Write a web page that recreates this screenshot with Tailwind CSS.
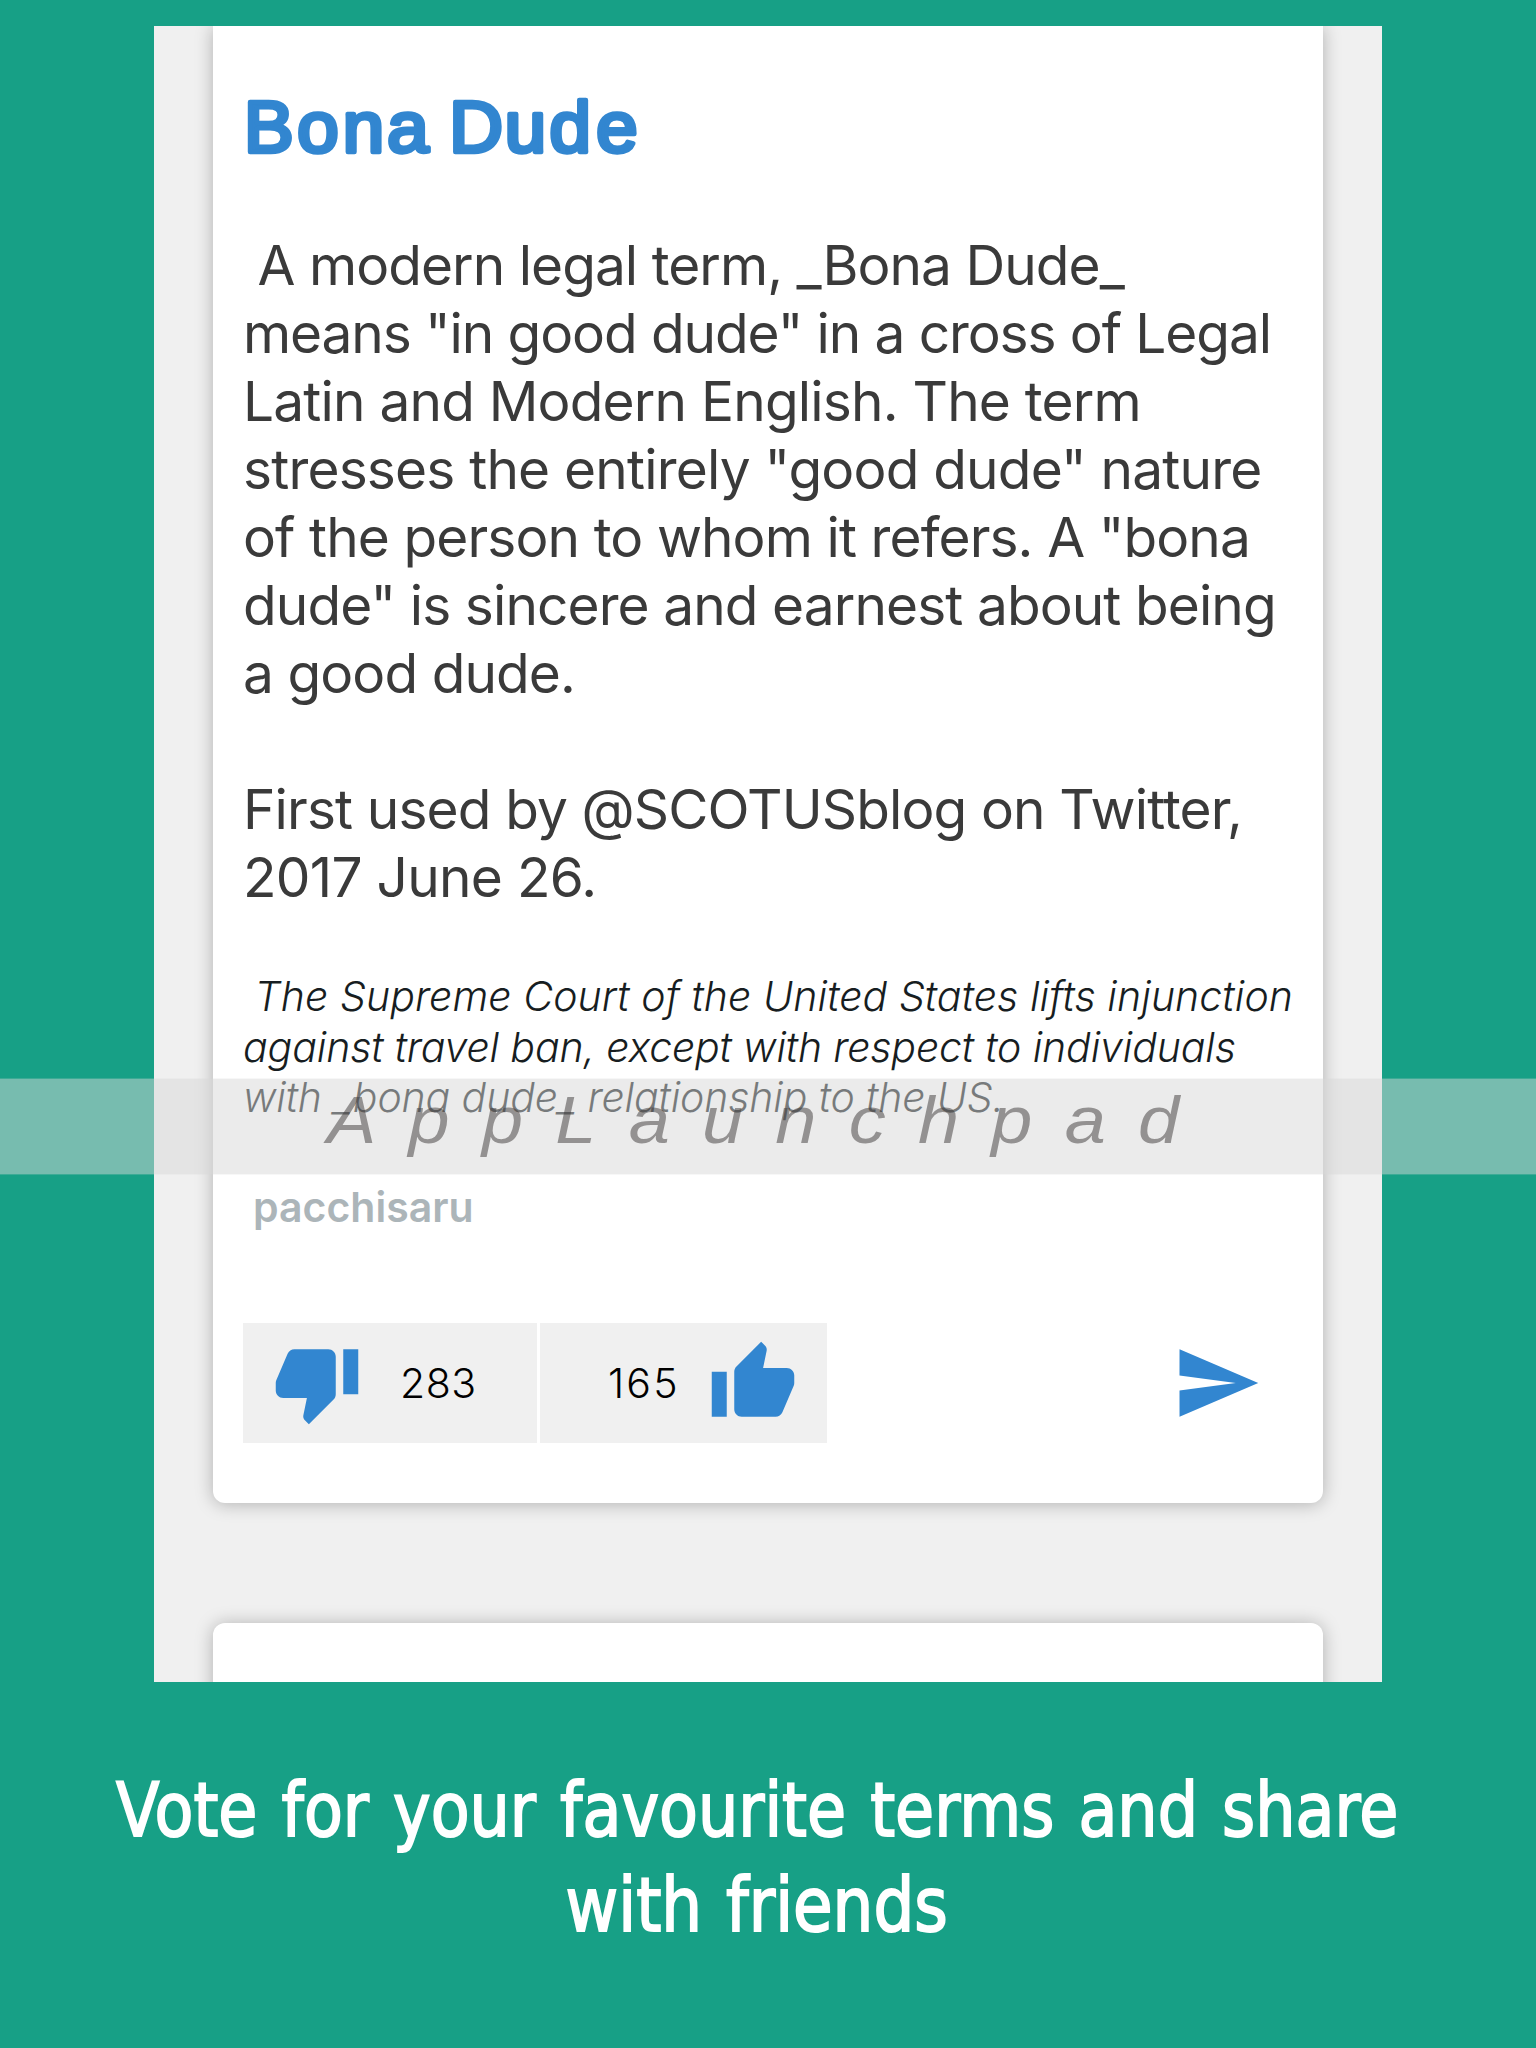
<!DOCTYPE html>
<html lang="en">
<head>
<meta charset="utf-8">
<title>Bona Dude</title>
<script src="https://cdn.jsdelivr.net/npm/@tailwindcss/browser@4"></script>
</head>
<body class="bg-[#17a086]">
<div class="relative flex h-[2048px] w-[1536px] flex-col items-center overflow-hidden bg-[#17a086] pt-[26px]">

  <!-- App screen -->
  <main class="flex h-[1656px] w-[1228px] shrink-0 flex-col items-center overflow-hidden bg-[#f0f0f0] font-['Inter',sans-serif]">
    <article class="h-[1477px] w-[1110px] shrink-0 rounded-b-xl bg-white pl-[30px] shadow-[0_1px_18px_rgba(0,0,0,0.27)]">
      <h1 class="h-[205px]">
        <svg class="block" width="440" height="205" viewBox="243 26 440 205">
          <text class="font-['Liberation_Sans',sans-serif] text-[71.500px]" transform="scale(1.04 1)" x="234.5 285.8 329.6 372.3 415 432 485.3 528.3 573.4" y="152.5" fill="#3286d0" stroke="#3286d0" stroke-width="4.4" stroke-linejoin="round" stroke-linecap="round">Bona Dude</text>
        </svg>
      </h1>

      <p class="text-[55px] leading-[68px] whitespace-pre text-[#3a3a3a]"><span class="block tracking-[-0.96px]"> A modern legal term, _Bona Dude_</span><span class="block tracking-[-1.1px]">means "in good dude" in a cross of Legal</span><span class="block tracking-[-0.81px]">Latin and Modern English. The term</span><span class="block tracking-[-0.81px]">stresses the entirely "good dude" nature</span><span class="block tracking-[-0.9px]">of the person to whom it refers. A "bona</span><span class="block tracking-[-0.91px]">dude" is sincere and earnest about being</span><span class="block tracking-[-0.93px]">a good dude.</span><span class="mt-[68px] block tracking-[-0.87px]">First used by @SCOTUSblog on Twitter,</span><span class="block tracking-[-0.72px]">2017 June 26.</span></p>

      <p class="mt-[60px] text-[41px] leading-[50.6px] font-light whitespace-pre text-[#171d21] italic"><span class="block tracking-[0.08px]"> The Supreme Court of the United States lifts injunction</span><span class="block tracking-[-0.15px]">against travel ban, except with respect to individuals</span><span class="block tracking-[-0.14px]">with _bona dude_ relationship to the US.</span></p>

      <p class="mt-[59px] pl-[10px] text-[41px] leading-[50px] font-semibold text-[#acb5b9]">pacchisaru</p>

      <footer class="mt-[91px] flex h-[120px] items-center gap-[3px] text-[41px] font-light text-black">
        <button class="flex h-full w-[294px] items-center bg-[#f0f0f0] pl-[29px]">
          <svg class="size-[90px] fill-[#3286d0]" viewBox="0 0 24 24"><path d="M15 3H6c-.83 0-1.54.5-1.84 1.22l-3.02 7.05c-.09.23-.14.47-.14.73v2c0 1.1.9 2 2 2h6.310l-.95 4.57-.03.32c0 .41.17.79.44 1.06L9.830 23l6.590-6.590c.36-.36.58-.86.58-1.410V5c0-1.100-.9-2-2-2zm4 0v12h4V3h-4z"/></svg>
          <span class="ml-[38px] pt-[2px] tracking-[0.5px]">283</span>
        </button>
        <button class="flex h-full w-[287px] items-center bg-[#f0f0f0] pl-[68px]">
          <span class="w-[100px] pt-[2px] text-left tracking-[2.2px]">165</span>
          <svg class="size-[90px] fill-[#3286d0]" viewBox="0 0 24 24"><path d="M1 21h4V9H1v12zm22-11c0-1.100-.9-2-2-2h-6.310l.95-4.570.03-.32c0-.41-.17-.79-.44-1.060L14.170 1 7.590 7.590C7.220 7.950 7 8.450 7 9v10c0 1.100.9 2 2 2h9c.83 0 1.540-.5 1.840-1.220l3.020-7.050c.09-.23.14-.47.14-.73v-2z"/></svg>
        </button>
        <svg class="mr-[61.500px] ml-auto size-[90px] fill-[#3286d0]" viewBox="0 0 24 24"><path d="M2.010 21L23 12 2.010 3 2 10l15 2-15 2z"/></svg>
      </footer>
    </article>

    <article class="mt-[120px] h-[200px] w-[1110px] shrink-0 rounded-xl bg-white shadow-[0_1px_18px_rgba(0,0,0,0.27)]"></article>
  </main>

  <!-- Caption -->
  <h2 class="mt-[81px] flex flex-col items-center pr-[22px] font-['DejaVu_Sans',sans-serif] text-[75px] leading-[95px] whitespace-nowrap text-white [-webkit-text-stroke:2px_white]">
    <span class="scale-x-[0.848] [word-spacing:4.5px]">Vote for your favourite terms and share</span>
    <span class="scale-x-[0.858] [word-spacing:4px]">with friends</span>
  </h2>

  <!-- Watermark ribbon over the whole page -->
  <div class="absolute top-[1078px] left-0 h-[97px] w-full border-y border-[#d7d7d7]/20 bg-[#d7d7d7]/50 bg-clip-padding">
    <svg class="-mt-px block" width="1536" height="96">
      <text class="font-['Liberation_Sans',sans-serif] text-[66px] tracking-[28.8px] italic" transform="translate(327 65) scale(1.12 1)" fill="#3c3838" fill-opacity="0.5">AppLaunchpad</text>
    </svg>
  </div>
</div>
</body>
</html>
